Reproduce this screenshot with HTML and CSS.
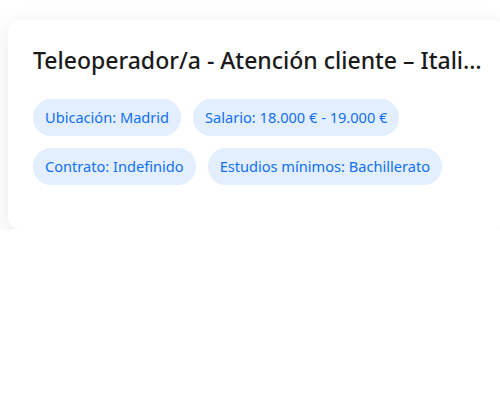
FILE: index.html
```html
<!DOCTYPE html>
<html>
<head lang="es">
    <meta charset="UTF-8">
    <title>Oferta</title>
    <link rel="stylesheet" href="styles.css">
</head>
<body>
    <div class="page">
        <div class="card">
            <h2 class="title">Teleoperador/a - Atención cliente – Italiano</h2>
            <div class="tags">
                <span class="tag">Ubicación: Madrid</span>
                <span class="tag">Salario: 18.000 € - 19.000 €</span>
                <span class="tag">Contrato: Indefinido</span>
                <span class="tag">Estudios mínimos: Bachillerato</span>
            </div>
        </div>
    </div>
</body>
</html>
```

FILE: styles.css
```css
*{
    margin:0px;
    padding:0px;
    box-sizing:border-box;
}
body{
    background-color:#ffffff;
    font-family:"Noto Sans","Open Sans",sans-serif;
    overflow:hidden;
}
.page{
    padding:20px 0 0 8px;
}
.card{
    width:500px;
    background-color:#ffffff;
    border-radius:12px;
    padding:24px 24px 44px 25px;
    box-shadow:0 6px 24px rgba(0,0,0,0.09);
}
.title{
    font-size:23px;
    font-weight:500;
    color:#1a1a1a;
    line-height:32px;
    white-space:nowrap;
    overflow:hidden;
    text-overflow:ellipsis;
    margin-bottom:23px;
}
.tags{
    display:flex;
    flex-wrap:wrap;
    gap:12px 12px;
}
.tag{
    display:inline-block;
    background-color:#e3efff;
    color:#1170f5;
    font-size:14.6px;
    font-weight:400;
    line-height:21px;
    padding:8px 12px;
    border-radius:18px;
}
```
